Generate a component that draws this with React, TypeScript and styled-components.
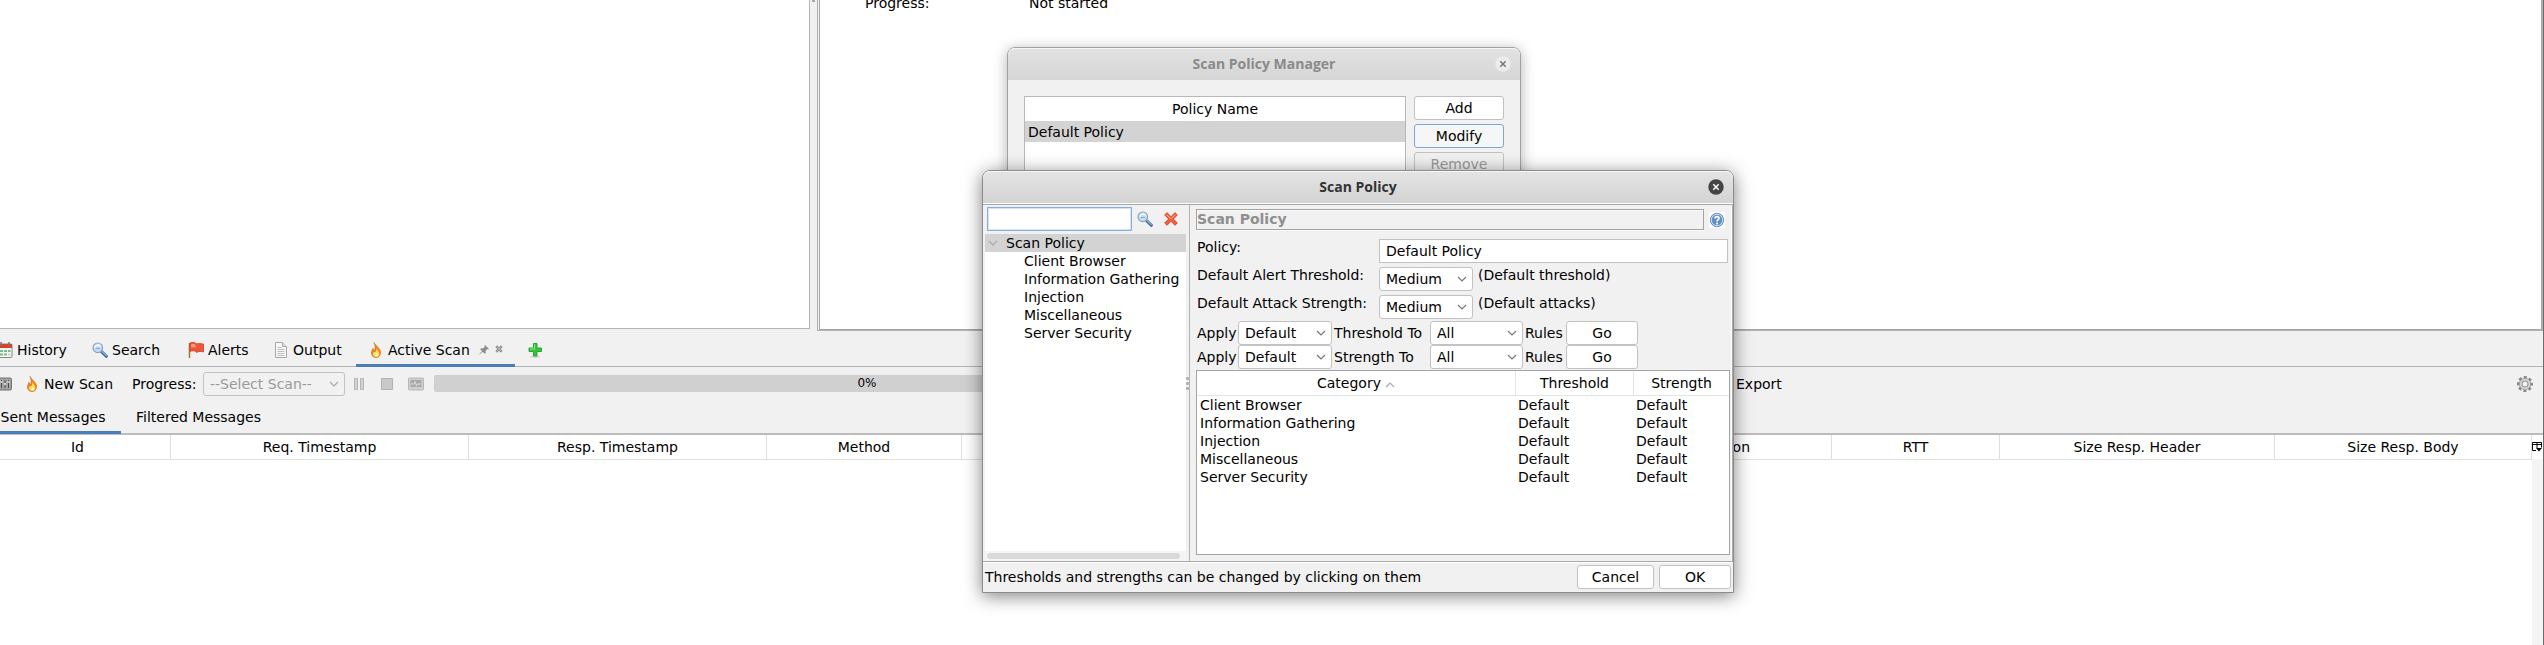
import React from 'react';
import styled, { createGlobalStyle, css } from 'styled-components';

const GlobalStyle = createGlobalStyle`
  *, *::before, *::after { box-sizing: border-box; }
  body { margin: 0; background: #fff; color: #000; overflow: hidden; }
  body, button, input, select, table { font: 400 14px/18px "DejaVu Sans", sans-serif; }
  button, input, select { margin: 0; padding: 0; color: inherit; }
  svg { display: block; flex: none; }
`;

/* ---------- main window ---------- */

const Page = styled.main`
  position: relative;
  min-height: 100vh;
  overflow: hidden;
  display: flex;
`;

const Shell = styled.div`
  flex: 1;
  min-width: 0;
  margin-left: -15px;
  border-right: 1px solid #6b6b6b;
  background: #f1f1f1;
  display: flex;
  flex-direction: column;
`;

const Workspace = styled.div`
  display: flex;
  height: 331px;
`;

const SitesPane = styled.section`
  width: 825px;
  margin-bottom: 2px;
  background: #fff;
  border-right: 1px solid #b4b4b4;
  border-bottom: 1px solid #b4b4b4;
`;

const Divider = styled.div`
  width: 7px;
  display: flex;
  justify-content: center;
  &::after {
    content: '';
    width: 3px;
    height: 2px;
    background: #a8a8a8;
  }
`;

const RequestPane = styled.section`
  flex: 1;
  padding-left: 1px;
  border: solid #b0b0b0;
  border-width: 0 1px 1px 1px;
  display: flex;
`;

const RequestBody = styled.dl`
  flex: 1;
  margin: -6px 0 0;
  padding-left: 45px;
  background: #fff;
  border: solid #a8a8a8;
  border-width: 0 1px 1px 1px;
  display: grid;
  grid-template-columns: 164px 1fr;
  align-content: start;
  dd { margin: 0; }
`;

const TabBar = styled.nav`
  display: flex;
  height: 36px;
  border-bottom: 1px solid #b4b4b4;
`;

const SubTabBar = styled(TabBar)`
  height: 33px;
  border-bottom: 2px solid #bcbcbc;
`;

const Tab = styled.button<{ $width: number; $active?: boolean }>`
  width: ${p => p.$width}px;
  margin-bottom: -1px;
  padding: 5px 12px 0;
  border: 0;
  border-bottom: 3px solid ${p => (p.$active ? '#4a7ebb' : 'transparent')};
  background: none;
  display: flex;
  align-items: center;
  gap: 4px;
  white-space: nowrap;
`;

const SubTab = styled(Tab)`
  padding-top: 1px;
  justify-content: center;
`;

const TabMarks = styled.span`
  margin-left: auto;
  display: flex;
  gap: 6px;
`;

const Toolbar = styled.div`
  height: 35px;
  padding: 0 10px 2px 9px;
  display: flex;
  align-items: center;
  white-space: nowrap;
`;

const ToolButton = styled.button<{ $width?: number }>`
  width: ${p => (p.$width ? `${p.$width}px` : 'auto')};
  border: 0;
  background: none;
  display: flex;
  align-items: center;
  gap: 4px;
`;

const ToolLabel = styled.label`
  width: 71px;
`;

const ToolGroup = styled.div`
  width: 86px;
  padding: 0 7px 0 8px;
  display: flex;
  align-items: center;
  justify-content: space-between;
`;

const ProgressTrack = styled.div`
  width: 866px;
  height: 17px;
  margin-left: 3px;
  margin-right: 416px;
  border-radius: 2px;
  background: #d0d0d0;
  font-size: 12px;
  line-height: 17px;
  text-align: center;
`;

const Spacer = styled.span`
  flex: 1;
`;

const Messages = styled.section`
  flex: 1;
  background: #fff;
  display: flex;
  align-items: stretch;
`;

const MessageTable = styled.table`
  flex: 1;
  min-width: 0;
  height: 25px;
  border-collapse: separate;
  border-spacing: 0;
  table-layout: fixed;
  th {
    height: 25px;
    padding: 0;
    border-right: 1px solid #e0e0e0;
    border-bottom: 1px solid #e0e0e0;
    font-weight: 400;
  }
`;

const ColumnControl = styled.div`
  width: 11px;
  background: #f4f4f4;
  button {
    width: 11px;
    height: 24px;
    border: 0;
    background: #fff;
    display: flex;
    align-items: center;
  }
`;

/* ---------- shared controls ---------- */

const SelectBox = styled.span<{ $width: number; $disabled?: boolean }>`
  width: ${p => p.$width}px;
  height: 24px;
  display: inline-grid;
  color: ${p => (p.$disabled ? '#9a9a9a' : '#000')};
  select, svg { grid-area: 1 / 1; }
  select {
    appearance: none;
    width: 100%;
    padding-left: 6px;
    border: 1px solid #c2c2c2;
    border-radius: 3px;
    background: ${p => (p.$disabled ? '#f1f1f1' : '#fff')};
    opacity: 1;
  }
  svg {
    align-self: center;
    justify-self: end;
    margin-right: 6px;
    pointer-events: none;
  }
`;

const PushButton = styled.button<{ $width: number; $focus?: boolean }>`
  width: ${p => p.$width}px;
  height: 24px;
  border: 1px solid #c2c2c2;
  border-radius: 3px;
  background: #fff;
  text-align: center;
  &:disabled { background: #f1f1f1; color: #9a9a9a; }
  ${p => p.$focus && css`
    border-color: #7ea6d6;
    background: #f6f6f6;
  `}
`;

const TextField = styled.input<{ $focus?: boolean }>`
  width: 100%;
  height: 24px;
  padding: 0 6px;
  border: 1px solid ${p => (p.$focus ? '#87afda' : '#c2c2c2')};
  box-shadow: ${p => (p.$focus ? 'inset 0 0 0 1px #d3e2f4' : 'none')};
  background: #fff;
  outline: 0;
`;

/* ---------- dialogs ---------- */

const Dialog = styled.section<{ $left: number; $top: number; $width: number; $active?: boolean }>`
  position: absolute;
  left: ${p => p.$left}px;
  top: ${p => p.$top}px;
  width: ${p => p.$width}px;
  border: 1px solid ${p => (p.$active ? '#8c8c8c' : '#a2a2a2')};
  border-radius: 8px 8px 0 0;
  background: #f1f1f1;
  box-shadow: ${p => (p.$active ? '0 3px 18px rgba(0, 0, 0, 0.5)' : '0 2px 14px rgba(0, 0, 0, 0.3)')};
`;

const TitleBar = styled.header<{ $active?: boolean }>`
  height: 32px;
  padding: 0 9px;
  border-radius: 7px 7px 0 0;
  background: ${p => (p.$active ? 'linear-gradient(#e4e4e4, #d3d3d3)' : 'linear-gradient(#e2e2e2, #d6d6d6)')};
  box-shadow: inset 0 1px #f6f6f6;
  color: ${p => (p.$active ? '#333' : '#8a8a8a')};
  display: grid;
  grid-template-columns: 16px 1fr 16px;
  align-items: center;
  h2 {
    grid-column: 2;
    margin: 0;
    font: 700 14px/20px "Open Sans", sans-serif;
    text-align: center;
  }
`;

const CloseButton = styled.button`
  width: 16px;
  height: 16px;
  border: 0;
  background: none;
`;

const ManagerBody = styled.div`
  padding: 16px;
  display: flex;
  gap: 8px;
`;

const PolicyList = styled.div`
  flex: 1;
  height: 210px;
  border: 1px solid #b8b8b8;
  background: #fff;
  table { width: 100%; border-spacing: 0; }
  th { height: 24px; padding: 0; font-weight: 400; }
  td { height: 21px; padding: 0 3px; background: #d3d3d3; }
`;

const ButtonColumn = styled.div`
  display: flex;
  flex-direction: column;
  gap: 4px;
`;

const PolicyBody = styled.div`
  height: 358px;
  margin-top: 1px;
  border: solid #a8a8a8;
  border-width: 1px 1px 1px 0;
  box-shadow: 0 -1px #fff;
  display: flex;
`;

const TreePane = styled.aside`
  width: 203px;
  padding-left: 2px;
  display: flex;
  flex-direction: column;
`;

const FilterRow = styled.form`
  height: 29px;
  padding: 2px 8px 0 2px;
  display: grid;
  grid-template-columns: 145px 16px 14px;
  column-gap: 5px;
  align-items: start;
  button {
    height: 24px;
    border: 0;
    background: none;
    display: flex;
    align-items: center;
  }
  button:last-child { margin-left: 6px; }
`;

const Tree = styled.ul`
  flex: 1;
  margin: 0;
  padding: 0;
  background: #fff;
  list-style: none;
  white-space: nowrap;
`;

const TreeItem = styled.li<{ $root?: boolean }>`
  padding-left: ${p => (p.$root ? 3 : 39)}px;
  background: ${p => (p.$root ? '#d3d3d3' : 'none')};
  display: flex;
  align-items: center;
  gap: 8px;
`;

const ScrollTrack = styled.div`
  height: 10px;
  padding: 2px 6px 2px 2px;
  background: #f5f5f5;
  &::after {
    content: '';
    display: block;
    height: 6px;
    border-radius: 3px;
    background: #d9d9d9;
  }
`;

const Grip = styled.div`
  width: 3px;
  display: flex;
  flex-direction: column;
  justify-content: center;
  gap: 2px;
  i { width: 3px; height: 3px; border-radius: 1px; background: #b0b0b0; }
`;

const SettingsPane = styled.div`
  flex: 1;
  padding: 4px 1px 0 6px;
  border-left: 1px solid #b4b4b4;
  border-right: 1px solid #fff;
`;

const Heading = styled.div`
  display: flex;
  align-items: center;
  gap: 5px;
  margin-bottom: 9px;
  h3 {
    flex: 1;
    height: 21px;
    margin: 0;
    border: 1px solid #a4a4a4;
    box-shadow: inset 1px 1px #fafafa, 0 1px #fafafa;
    color: #8f8f8f;
    font: 700 14px/18px "DejaVu Sans", sans-serif;
  }
  button { height: 16px; margin-right: 5px; border: 0; background: #fff; }
`;

const FieldRow = styled.div`
  height: 24px;
  margin-bottom: 4px;
  padding: 0 2px 0 1px;
  display: grid;
  grid-template-columns: 182px 1fr;
  line-height: 16px;
  white-space: nowrap;
`;

const FieldValue = styled.div`
  display: flex;
  gap: 5px;
`;

const ApplyRows = styled.div`
  margin-top: -2px;
`;

const ApplyRow = styled.div`
  height: 24px;
  padding-left: 1px;
  display: grid;
  grid-template-columns: 39px 94px 94px 93px 39px 72px;
  column-gap: 2px;
  align-items: center;
  white-space: nowrap;
`;

const Rules = styled.div`
  margin-top: 1px;
  height: 185px;
  border: 1px solid #a4a4a4;
  background: #fff;
`;

const RulesTable = styled.table`
  width: 100%;
  border-spacing: 0;
  table-layout: fixed;
  th {
    height: 25px;
    padding: 0;
    border-bottom: 1px solid #e4e4e4;
    font-weight: 400;
  }
  th + th { border-left: 1px solid #e4e4e4; }
  td { height: 18px; padding: 0 3px; }
  th svg { display: inline-block; margin-left: 4px; }
`;

const DialogFooter = styled.footer`
  height: 30px;
  padding: 0 2px 2px;
  border-top: 1px solid #fff;
  display: flex;
  align-items: center;
  gap: 5px;
  p { flex: 1; margin: 0; }
`;

/* ---------- icons ---------- */

const Chevron = ({ up, color = '#777' }: { up?: boolean; color?: string }) => (
  <svg width="10" height="6" viewBox="0 0 10 6" fill="none" stroke={color} strokeWidth="1.2">
    <path d={up ? 'M1 5 5 1 9 5' : 'M1 1 5 5 9 1'} />
  </svg>
);

const Calendar = () => (
  <svg width="16" height="16" viewBox="0 0 16 16">
    <rect x="1" y="2" width="14" height="13.500" rx="1" fill="#f4f8f2" stroke="#7d8f7d" />
    <path d="M1 2h14v4H1z" fill="#d8402c" />
    <path d="M4 0v4M12 0v4" stroke="#777" strokeWidth="1.500" />
    <path d="M3 8h3v2H3zM7 8h3v2H7zM11 8h2.500v2H11zM3 11.500h3v2H3zM7 11.500h3v2H7z" fill="#7fb58a" />
    <path d="M11 11.500h2.500v2H11z" fill="#c3d8c3" />
  </svg>
);

const Magnifier = () => (
  <svg width="16" height="16" viewBox="0 0 16 16">
    <path d="m9.500 9.500 4.800 4.800" stroke="#2f5c9a" strokeWidth="3" strokeLinecap="round" />
    <path d="m10 9.500 4.300 4.300" stroke="#8db8e8" strokeWidth="1.200" strokeLinecap="round" />
    <circle cx="5.800" cy="5.800" r="4.800" fill="#c3ddf8" stroke="#93a1b3" strokeWidth="1.200" />
    <path d="M3 5.500a3 3 0 0 1 5.500-1" fill="none" stroke="#fff" strokeWidth="1.400" />
    <path d="M3.500 6.500h4.500" stroke="#7aa9de" />
  </svg>
);

const Flag = () => (
  <svg width="16" height="16" viewBox="0 0 16 16">
    <path d="M1.500 1v15" stroke="#a8793a" strokeWidth="1.600" />
    <path d="M2 1c2-1 4-1 6 .5V2c2-1 5-.5 7.500 0v8c-2.500-.8-5-.8-7 .5L8 9.500C6 8.500 4 8.500 2 9.500z" fill="#f0563c" stroke="#c8351f" strokeWidth=".7" />
    <path d="M3 2.500c1.500-.6 3-.6 4.500.3v3C6 5 4.500 5 3 5.500z" fill="#ff9a80" />
  </svg>
);

const Sheet = () => (
  <svg width="16" height="16" viewBox="0 0 16 16">
    <path d="M2.500.5h7l4 4v11h-11z" fill="#f8f8f8" stroke="#a9a9a9" />
    <path d="M9.500.5v4h4" fill="#ddd" stroke="#a9a9a9" />
    <path d="M4.500 5.500h4M4.500 7.500h7M4.500 9.500h7M4.500 11.500h7M4.500 13.500h7" stroke="#bdbdbd" />
  </svg>
);

const Flame = () => (
  <svg width="16" height="16" viewBox="0 0 16 16">
    <path d="M6 .5c1 3 6.500 5.500 6.500 10 0 3-1.800 5-4.500 5s-4.500-2-4.500-4.500c0-1.700 1-3 1.300-4.500C6.500 7.500 6 9 6.300 9.500 7.800 7 7.500 3.500 6 .5z" fill="#f08a1c" stroke="#d9601a" strokeWidth=".7" />
    <path d="M8.500 6.500c.5 2 2.800 3 2.800 5.200 0 1.800-1.200 3.200-3.100 3.200S5 13.500 5 12c0-.8.500-1.300.800-2 1.400 1.200 2.700-.8 2.700-3.500z" fill="#fee05a" />
    <path d="M8.500 10.500c.3 1 1.300 1.400 1.300 2.400 0 .8-.6 1.400-1.500 1.400s-1.600-.6-1.600-1.300c.9.2 1.600-.7 1.800-2.500z" fill="#fffbe0" />
  </svg>
);

const Pin = () => (
  <svg width="10" height="10" viewBox="0 0 10 10">
    <path d="m6 0 4 4-1 .6L8.300 4 6.500 6l.3 2-1 .8L3.700 6.700.5 9.500 0 10l.5-1L3 6 1.200 4.200l.8-1 2 .3L6 1.700 5.400 1z" fill="#8b8b8b" />
  </svg>
);

const SmallCross = () => (
  <svg width="8" height="8" viewBox="0 0 8 8">
    <path d="m1.200 1.200 5.600 5.600M6.800 1.200 1.200 6.800" stroke="#8b8b8b" strokeWidth="2.400" />
    <path d="m1.500 1.500 5 5M6.500 1.500l-5 5" stroke="#c4c4c4" strokeWidth=".8" />
  </svg>
);

const Plus = () => (
  <svg width="16" height="16" viewBox="0 0 16 16">
    <ellipse cx="8" cy="14.800" rx="5" ry="1" fill="#d2d2d2" />
    <path d="M6.500 1.500h3.500V6h4.500v3.500H10v4.500H6.500V9.500H2V6h4.500z" fill="#37c23c" stroke="#1f9f2b" strokeWidth=".9" />
    <path d="M7.500 2.500v4.500H3" fill="none" stroke="#93e88f" />
  </svg>
);

const Mixer = () => (
  <svg width="18" height="14" viewBox="0 0 18 14">
    <rect x=".5" y="1" width="17" height="12" rx="1.500" fill="#a6a6a6" stroke="#6d6d6d" />
    <path d="M4 3v8M7.500 3v8M11 3v8M14.500 3v8" stroke="#4a4a4a" />
    <path d="M3 8h2M6.500 5h2M10 7h2M13.500 5h2" stroke="#eee" strokeWidth="1.400" />
  </svg>
);

const Pause = () => (
  <svg width="12" height="14" viewBox="0 0 12 14" fill="#d2d2d2" stroke="#b4b4b4">
    <path d="M1.500 1.500h3v11h-3zM7.500 1.500h3v11h-3z" />
  </svg>
);

const Stop = () => (
  <svg width="12" height="12" viewBox="0 0 12 12">
    <path d="M.5.5h11v11H.5z" fill="#c9c9c9" stroke="#b2b2b2" />
  </svg>
);

const Monitor = () => (
  <svg width="16" height="14" viewBox="0 0 16 14">
    <rect x=".5" y="1" width="15" height="12" rx="1" fill="#cfcfcf" stroke="#b8b8b8" />
    <path d="M2.500 3h11v7h-11z" fill="#a9a9a9" />
    <path d="M3 7h3l1-2.500L8.500 9l1-2h3.500" fill="none" stroke="#dedede" />
  </svg>
);

const Gear = () => (
  <svg width="16" height="16" viewBox="0 0 16 16">
    <circle cx="8" cy="8" r="6.600" fill="none" stroke="#858585" strokeWidth="2.800" strokeDasharray="2.900 2.283" strokeDashoffset="1.400" />
    <circle cx="8" cy="8" r="4.300" fill="none" stroke="#858585" strokeWidth="3.600" />
    <circle cx="8" cy="8" r="4.400" fill="none" stroke="#d0d0d0" strokeWidth="2.200" />
  </svg>
);

const ColumnsIcon = () => (
  <svg width="10" height="10" viewBox="0 0 10 10" fill="none" stroke="#000">
    <path d="M4 8.500H.5v-8h9v5M0 2.500h10M5 0v6" />
    <path d="M4 6h6L7 9.500z" fill="#000" stroke="none" />
  </svg>
);

const RedCross = () => (
  <svg width="14" height="14" viewBox="0 0 14 14">
    <path d="m3 .7 4 4 4-4L13.300 3l-4 4 4 4-2.300 2.300-4-4-4 4L.7 11l4-4-4-4z" fill="#f4603f" stroke="#cf3a22" strokeWidth=".9" />
    <path d="m2.500 2.800 4.500 4 4.200-4.200" fill="none" stroke="#ffac95" />
  </svg>
);

const Help = () => (
  <svg width="16" height="16" viewBox="0 0 16 16">
    <circle cx="8" cy="8" r="6.700" fill="#5f8fca" stroke="#6d92c2" />
    <circle cx="8" cy="8" r="5.700" fill="none" stroke="#cfe0f4" />
    <path d="M6 6.500C6 4 10 4 10 6.300 10 7.800 8 7.800 8 9.500" fill="none" stroke="#fff" strokeWidth="1.600" />
    <circle cx="8" cy="11.500" r="1" fill="#fff" />
  </svg>
);

const CloseIcon = ({ active }: { active?: boolean }) => (
  <svg width="16" height="16" viewBox="0 0 16 16">
    <circle cx="8" cy="8" r="7.700" fill={active ? '#444' : '#ececec'} />
    <path d="m5.300 5.300 5.400 5.400M10.700 5.300l-5.400 5.400" stroke={active ? '#fff' : '#777'} strokeWidth="1.500" />
  </svg>
);

/* ---------- content ---------- */

const categories = ['Client Browser', 'Information Gathering', 'Injection', 'Miscellaneous', 'Server Security'];

const messageColumns: { name: string; width?: number }[] = [
  { name: 'Id', width: 186 },
  { name: 'Req. Timestamp', width: 298 },
  { name: 'Resp. Timestamp', width: 298 },
  { name: 'Method', width: 195 },
  { name: '' },
  { name: 'Reason', width: 214 },
  { name: 'RTT', width: 168 },
  { name: 'Size Resp. Header', width: 275 },
  { name: 'Size Resp. Body', width: 257 },
];

type SelectProps = { id?: string; label?: string; value: string; width: number; disabled?: boolean };

const Select = ({ id, label, value, width, disabled }: SelectProps) => (
  <SelectBox $width={width} $disabled={disabled}>
    <select id={id} aria-label={label} disabled={disabled} defaultValue={value}>
      <option>{value}</option>
    </select>
    <Chevron color={disabled ? '#aaa' : '#777'} />
  </SelectBox>
);

const MainWindow = () => (
  <Shell>
    <Workspace>
      <SitesPane />
      <Divider />
      <RequestPane>
        <RequestBody>
          <dt>Progress:</dt>
          <dd>Not started</dd>
        </RequestBody>
      </RequestPane>
    </Workspace>
    <TabBar>
      <Tab $width={95}><Calendar />History</Tab>
      <Tab $width={96}><Magnifier />Search</Tab>
      <Tab $width={85}><Flag />Alerts</Tab>
      <Tab $width={95}><Sheet />Output</Tab>
      <Tab $width={159} $active>
        <Flame />Active Scan
        <TabMarks><Pin /><SmallCross /></TabMarks>
      </Tab>
      <Tab $width={40} aria-label="Add tab"><Plus /></Tab>
    </TabBar>
    <Toolbar>
      <ToolButton $width={30} aria-label="Scan policies"><Mixer /></ToolButton>
      <ToolButton $width={108}><Flame />New Scan</ToolButton>
      <ToolLabel htmlFor="scan">Progress:</ToolLabel>
      <Select id="scan" value="--Select Scan--" width={142} disabled />
      <ToolGroup>
        <ToolButton aria-label="Pause"><Pause /></ToolButton>
        <ToolButton aria-label="Stop"><Stop /></ToolButton>
        <ToolButton aria-label="Scan progress details"><Monitor /></ToolButton>
      </ToolGroup>
      <ProgressTrack role="progressbar" aria-valuenow={0}>0%</ProgressTrack>
      <ToolButton><Sheet />Export</ToolButton>
      <Spacer />
      <ToolButton aria-label="Options"><Gear /></ToolButton>
    </Toolbar>
    <SubTabBar>
      <SubTab $width={136} $active>Sent Messages</SubTab>
      <SubTab $width={155}>Filtered Messages</SubTab>
    </SubTabBar>
    <Messages>
      <MessageTable>
        <colgroup>
          {messageColumns.map(c => <col key={c.name} width={c.width} />)}
        </colgroup>
        <thead>
          <tr>{messageColumns.map(c => <th key={c.name}>{c.name}</th>)}</tr>
        </thead>
      </MessageTable>
      <ColumnControl>
        <button aria-label="Choose columns"><ColumnsIcon /></button>
      </ColumnControl>
    </Messages>
  </Shell>
);

const PolicyManager = () => (
  <Dialog $left={1007} $top={47} $width={514}>
    <TitleBar>
      <h2>Scan Policy Manager</h2>
      <CloseButton aria-label="Close"><CloseIcon /></CloseButton>
    </TitleBar>
    <ManagerBody>
      <PolicyList>
        <table>
          <thead><tr><th>Policy Name</th></tr></thead>
          <tbody><tr><td>Default Policy</td></tr></tbody>
        </table>
      </PolicyList>
      <ButtonColumn>
        <PushButton $width={90}>Add</PushButton>
        <PushButton $width={90} $focus>Modify</PushButton>
        <PushButton $width={90} disabled>Remove</PushButton>
      </ButtonColumn>
    </ManagerBody>
  </Dialog>
);

const PolicyEditor = () => (
  <Dialog $left={982} $top={170} $width={752} $active>
    <TitleBar $active>
      <h2>Scan Policy</h2>
      <CloseButton aria-label="Close"><CloseIcon active /></CloseButton>
    </TitleBar>
    <PolicyBody>
      <TreePane>
        <FilterRow>
          <TextField $focus aria-label="Filter" />
          <button type="button" aria-label="Search"><Magnifier /></button>
          <button type="button" aria-label="Clear"><RedCross /></button>
        </FilterRow>
        <Tree>
          <TreeItem $root><Chevron color="#aaa" />Scan Policy</TreeItem>
          {categories.map(name => <TreeItem key={name}>{name}</TreeItem>)}
        </Tree>
        <ScrollTrack />
      </TreePane>
      <Grip><i /><i /><i /></Grip>
      <SettingsPane>
        <Heading>
          <h3>Scan Policy</h3>
          <button aria-label="Help"><Help /></button>
        </Heading>
        <FieldRow>
          <label htmlFor="policy">Policy:</label>
          <TextField id="policy" defaultValue="Default Policy" />
        </FieldRow>
        <FieldRow>
          <label htmlFor="threshold">Default Alert Threshold:</label>
          <FieldValue><Select id="threshold" value="Medium" width={94} />(Default threshold)</FieldValue>
        </FieldRow>
        <FieldRow>
          <label htmlFor="strength">Default Attack Strength:</label>
          <FieldValue><Select id="strength" value="Medium" width={94} />(Default attacks)</FieldValue>
        </FieldRow>
        <ApplyRows>
          {['Threshold', 'Strength'].map(kind => (
            <ApplyRow key={kind}>
              <span>Apply</span>
              <Select label={kind} value="Default" width={94} />
              <span>{kind} To</span>
              <Select label={`${kind} rules`} value="All" width={93} />
              <span>Rules</span>
              <PushButton $width={72}>Go</PushButton>
            </ApplyRow>
          ))}
        </ApplyRows>
        <Rules>
          <RulesTable>
            <colgroup><col /><col width="118" /><col width="96" /></colgroup>
            <thead>
              <tr>
                <th>Category<Chevron up color="#aaa" /></th>
                <th>Threshold</th>
                <th>Strength</th>
              </tr>
            </thead>
            <tbody>
              {categories.map(name => (
                <tr key={name}><td>{name}</td><td>Default</td><td>Default</td></tr>
              ))}
            </tbody>
          </RulesTable>
        </Rules>
      </SettingsPane>
    </PolicyBody>
    <DialogFooter>
      <p>Thresholds and strengths can be changed by clicking on them</p>
      <PushButton $width={77}>Cancel</PushButton>
      <PushButton $width={72}>OK</PushButton>
    </DialogFooter>
  </Dialog>
);

export default function App() {
  return (
    <>
      <GlobalStyle />
      <Page>
        <MainWindow />
        <PolicyManager />
        <PolicyEditor />
      </Page>
    </>
  );
}
